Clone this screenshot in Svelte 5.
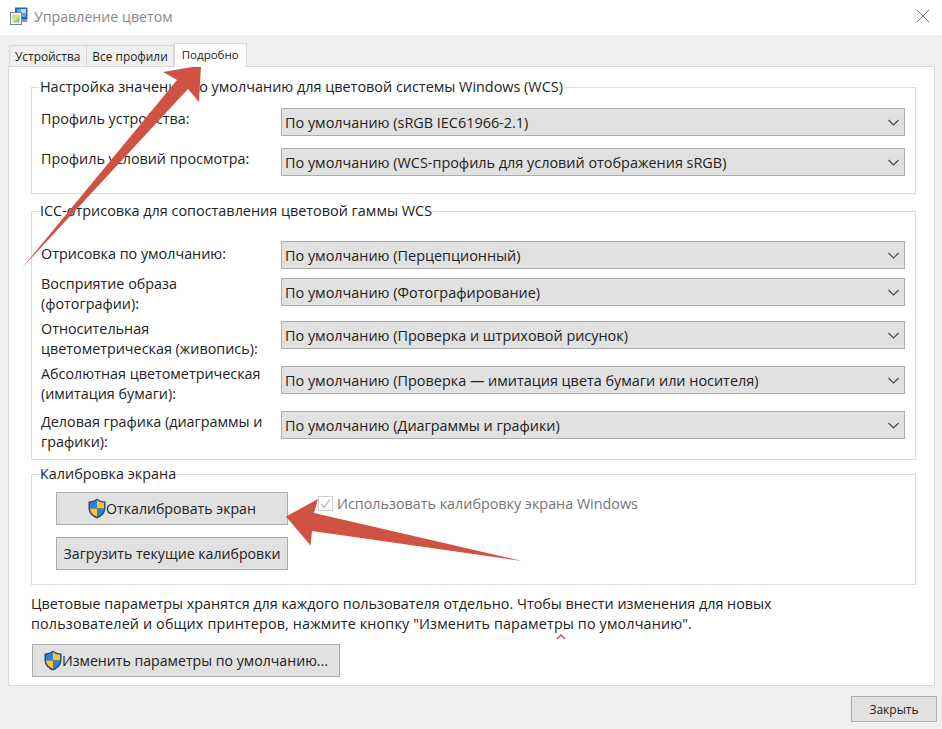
<script>
  const wcs = [
    { label: 'Профиль устройства:', value: 'По умолчанию (sRGB IEC61966-2.1)', h: 40, dy: 1 },
    { label: 'Профиль условий просмотра:', value: 'По умолчанию (WCS-профиль для условий отображения sRGB)', h: 40, dy: 1 }
  ];
  const icc = [
    { label: 'Отрисовка по умолчанию:', value: 'По умолчанию (Перцепционный)', h: 37, dy: 3 },
    { label: 'Восприятие образа\n(фотографии):', value: 'По умолчанию (Фотографирование)', h: 43, dy: -4 },
    { label: 'Относительная\nцветометрическая (живопись):', value: 'По умолчанию (Проверка и штриховой рисунок)', h: 45, dy: -2 },
    { label: 'Абсолютная цветометрическая\n(имитация бумаги):', value: 'По умолчанию (Проверка — имитация цвета бумаги или носителя)', h: 45, dy: -2 },
    { label: 'Деловая графика (диаграммы и\nграфики):', value: 'По умолчанию (Диаграммы и графики)', h: 45, dy: 1 }
  ];
</script>

{#snippet shield()}
  <svg class="shield" width="18" height="21" viewBox="0 0 18 21">
    <path d="M9 0.500 C7 2.500 3.500 3.500 0.500 3.500 L0.500 10 C0.500 15 4 18.500 9 20.500 C14 18.500 17.500 15 17.500 10 L17.500 3.500 C14.500 3.500 11 2.500 9 0.500 Z" fill="#2f4a73"/>
    <path d="M9 2 C7 3.800 4.500 4.500 2 4.800 L2 10.500 L9 10.500 Z" fill="#2f80d8"/>
    <path d="M9 2 C11 3.800 13.500 4.500 16 4.800 L16 10.500 L9 10.500 Z" fill="#f7c52e"/>
    <path d="M2 10.500 L9 10.500 L9 18.800 C5 17 2.300 14.500 2 10.500 Z" fill="#f7c52e"/>
    <path d="M16 10.500 L9 10.500 L9 18.800 C13 17 15.700 14.500 16 10.500 Z" fill="#2f80d8"/>
  </svg>
{/snippet}

{#snippet select(value)}
  <div class="select">
    <span>{value}</span>
    <svg width="11" height="7" viewBox="0 0 11 7"><path d="M0.500 1 L5.500 6 L10.500 1" fill="none" stroke="#444" stroke-width="1.100"/></svg>
  </div>
{/snippet}

{#snippet formRow(row)}
  <div class="row" style="height:{row.h}px">
    <div class="label" style="margin-top:{row.dy}px">{row.label}</div>
    {@render select(row.value)}
  </div>
{/snippet}

<div class="window">
  <header class="titlebar">
    <svg class="appicon" width="18" height="18" viewBox="0 0 18 18">
      <defs>
        <linearGradient id="tile" x1="0" y1="0" x2="1" y2="1">
          <stop offset="0" stop-color="#6fd8e8"/>
          <stop offset="0.400" stop-color="#f0e860"/>
          <stop offset="0.700" stop-color="#70e070"/>
          <stop offset="1" stop-color="#f070d0"/>
        </linearGradient>
      </defs>
      <rect x="5" y="0.500" width="12.500" height="11.500" fill="#2f62b4"/>
      <rect x="7" y="2" width="9" height="8" fill="#46b6ea"/>
      <rect x="11" y="2" width="5" height="4" fill="#c8d8f0"/>
      <rect x="11" y="12" width="6" height="3" fill="#8a93a6"/>
      <rect x="0.500" y="5.500" width="11" height="12" fill="#f4f4f4" stroke="#7c8496"/>
      <rect x="2.500" y="7.500" width="7" height="8" fill="url(#tile)"/>
    </svg>
    <span class="title">Управление цветом</span>
    <svg class="close" width="12" height="12" viewBox="0 0 12 12"><path d="M0 0 L12 12 M12 0 L0 12" stroke="#666" stroke-width="0.900" fill="none"/></svg>
  </header>

  <main class="body">
    <nav class="tabs">
      <div class="tab first">Устройства</div>
      <div class="tab">Все профили</div>
      <div class="tab active">Подробно</div>
    </nav>

    <section class="panel">
      <fieldset class="group wcs">
        <legend>Настройка значений по умолчанию для цветовой системы Windows (WCS)</legend>
        {#each wcs as row}
          {@render formRow(row)}
        {/each}
      </fieldset>

      <fieldset class="group icc">
        <legend>ICC-отрисовка для сопоставления цветовой гаммы WCS</legend>
        {#each icc as row}
          {@render formRow(row)}
        {/each}
      </fieldset>

      <fieldset class="group calib">
        <legend>Калибровка экрана</legend>
        <div class="calib-grid">
          <div class="calib-buttons">
            <button class="btn wide">{@render shield()}<span>Откалибровать экран</span></button>
            <button class="btn wide">Загрузить текущие калибровки</button>
          </div>
          <div class="check">
            <span class="box"><svg width="13" height="13" viewBox="0 0 13 13"><path d="M2 7 L5 10.500 L11 2.500" fill="none" stroke="#c4c4c4" stroke-width="1.500"/></svg></span>
            <span>Использовать калибровку экрана Windows</span>
          </div>
        </div>
      </fieldset>

      <p class="note">Цветовые параметры хранятся для каждого пользователя отдельно. Чтобы внести изменения для новых<br/><span class="note-second">пользователей и общих принтеров, нажмите кнопку "Изменить параметры по умолчанию".</span></p>

      <button class="btn defaults">{@render shield()}<span>Изменить параметры по умолчанию...</span></button>
    </section>

    <footer class="footer">
      <button class="btn closebtn">Закрыть</button>
    </footer>
  </main>

  <svg class="annotations" width="942" height="729" viewBox="0 0 942 729">
    <path d="M201 65.500 L163 72 L177 80 L22 268 L188 89 L199 102 Z" fill="#d05242"/>
    <path d="M286 516.500 L318 499 L314 513 L522 561 L312 531 L310.500 545.500 Z" fill="#d05242"/>
    <path d="M557 639 L561 635 L565 639" fill="none" stroke="#d05242" stroke-width="1.500"/>
  </svg>
</div>

<style>
  :global(body) {
    margin: 0;
    background: #f0f0f0;
  }
  .window {
    position: relative;
    width: 942px;
    height: 729px;
    overflow: hidden;
    background: #f0f0f0;
    font-family: "Open Sans", "Noto Sans", sans-serif;
    font-size: 14.350px;
    color: #222;
  }
  .titlebar {
    height: 35px;
    background: #fff;
    display: flex;
    align-items: center;
    padding: 0 13px 3px 10px;
    box-sizing: border-box;
  }
  .appicon { margin-right: 6px; }
  .title {
    color: #8a8a8a;
    font-size: 14.200px;
    flex: 1;
  }
  .body { padding: 9px 7px 0 8px; }
  .tabs {
    display: flex;
    height: 22px;
    padding-left: 1px;
    position: relative;
    z-index: 1;
  }
  .tab {
    height: 21px;
    margin-top: 1px;
    padding: 0 5px;
    background: #f0f0f0;
    border: 1px solid #d9d9d9;
    border-bottom: none;
    border-left: none;
    font-size: 11.900px;
    line-height: 21px;
    box-sizing: border-box;
  }
  .tab.first { border-left: 1px solid #d9d9d9; padding-right: 6px; }
  .tab.active {
    height: 24px;
    margin-top: -1px;
    background: #fff;
    border-left: 1px solid #d9d9d9;
    padding: 0 7px;
    font-size: 11.500px;
    line-height: 22px;
  }
  .panel {
    height: 620px;
    box-sizing: border-box;
    background: #fff;
    border: 1px solid #d9d9d9;
    padding: 10px 18px 0 22px;
  }
  .group {
    margin: 0;
    padding: 0;
    border: 1px solid #dcdcdc;
    min-width: 0;
    box-sizing: border-box;
  }
  legend {
    margin-left: 7px;
    padding: 0 1px;
    font-size: 14.420px;
    line-height: 20px;
    white-space: nowrap;
  }
  .wcs { height: 117px; padding-top: 11px; }
  .icc { height: 259px; margin-top: 7px; padding-top: 20px; }
  .calib { height: 121px; margin-top: 4px; }
  .row {
    display: grid;
    grid-template-columns: 240px 624px;
    padding-left: 9px;
    align-items: start;
  }
  .label {
    white-space: pre-line;
    line-height: 20px;
  }
  .select {
    height: 28px;
    box-sizing: border-box;
    background: #e1e1e1;
    border: 1px solid #adadad;
    display: flex;
    align-items: center;
    justify-content: space-between;
    padding: 0 5px 0 3px;
    font-size: 14.420px;
  }
  .btn {
    font: inherit;
    font-size: 14.150px;
    color: inherit;
    background: #e1e1e1;
    border: 1px solid #adadad;
    display: flex;
    align-items: center;
    justify-content: center;
    padding: 0;
    box-sizing: border-box;
    white-space: nowrap;
  }
  .calib-grid {
    display: flex;
    padding: 8px 0 0 24px;
  }
  .calib-buttons {
    display: flex;
    flex-direction: column;
    gap: 12px;
  }
  .wide { width: 232px; height: 33px; }
  .check {
    display: flex;
    align-items: center;
    gap: 4px;
    height: 22px;
    margin-left: 30px;
    color: #757575;
  }
  .box {
    width: 15px;
    height: 15px;
    border: 1px solid #d0d0d0;
    box-sizing: border-box;
    display: flex;
    align-items: center;
    justify-content: center;
  }
  .note {
    margin: 9px 0 0;
    line-height: 20px;
    white-space: nowrap;
  }
  .note-second { letter-spacing: 0.150px; }
  .defaults {
    width: 308px;
    height: 33px;
    margin: 10px 0 0 1px;
  }
  .footer {
    display: flex;
    justify-content: flex-end;
    padding-top: 10px;
    margin-right: -2px;
  }
  .closebtn {
    width: 86px;
    height: 26px;
    font-size: 12px;
  }
  .annotations {
    position: absolute;
    left: 0;
    top: 0;
    pointer-events: none;
  }
</style>
